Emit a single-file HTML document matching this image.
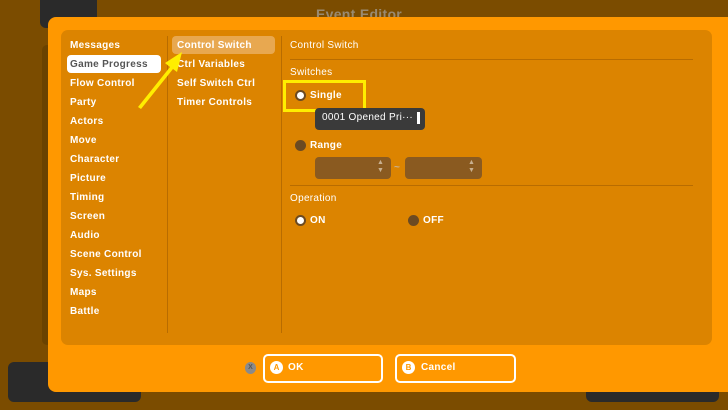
<!DOCTYPE html>
<html><head><meta charset="utf-8"><style>
body{margin:0;width:728px;height:410px;background:#7b4c00;overflow:hidden;position:relative;font-family:"Liberation Sans",sans-serif;color:#fff;font-size:10px;font-weight:bold}
.a{position:absolute}
.t{position:absolute;white-space:nowrap;letter-spacing:.3px}
.radio{position:absolute;width:11px;height:11px;border-radius:50%;background:#6b4a22}
.radio.on{background:#fff;border:2px solid #6b4a22;width:7px;height:7px}
.btn{position:absolute;height:25px;border:2px solid #fff;border-radius:5px;background:#ff9800}
.circ{position:absolute;width:13px;height:13px;border-radius:50%;background:#fff;color:#ff9800;font-size:8px;text-align:center;line-height:13px}
</style></head><body>
<div class="a" style="left:40px;top:-6px;width:57px;height:34px;background:#2a2a2a;border-radius:6px"></div>
<div class="a" style="left:42px;top:45px;width:10px;height:300px;background:#6a4200;border-radius:6px"></div>
<div class="t" style="left:316px;top:6px;color:#9a8a70;font-size:14px">Event Editor</div>
<div class="a" style="left:8px;top:362px;width:133px;height:40px;background:#2a2a2a;border-radius:6px"></div>
<div class="a" style="left:586px;top:380px;width:133px;height:22px;background:#2a2a2a;border-radius:6px"></div>
<div class="a" style="left:48px;top:17px;width:690px;height:375px;background:#ff9800;border-radius:8px"></div>
<div class="a" style="left:61px;top:30px;width:651px;height:315px;background:#dc8400;border-radius:7px"></div>
<div class="a" style="left:167px;top:36px;width:1px;height:297px;background:#b86c00"></div>
<div class="a" style="left:281px;top:36px;width:1px;height:297px;background:#b86c00"></div>
<div class="a" style="left:67px;top:55px;width:94px;height:18px;background:#fff;border-radius:4px"></div>
<div class="a" style="left:172px;top:36px;width:103px;height:18px;background:#e8a850;border-radius:4px"></div>
<div class="t" style="left:70px;top:40px">Messages</div>
<div class="t" style="left:70px;top:59px;color:#555">Game Progress</div>
<div class="t" style="left:70px;top:78px">Flow Control</div>
<div class="t" style="left:70px;top:97px">Party</div>
<div class="t" style="left:70px;top:116px">Actors</div>
<div class="t" style="left:70px;top:135px">Move</div>
<div class="t" style="left:70px;top:154px">Character</div>
<div class="t" style="left:70px;top:173px">Picture</div>
<div class="t" style="left:70px;top:192px">Timing</div>
<div class="t" style="left:70px;top:211px">Screen</div>
<div class="t" style="left:70px;top:230px">Audio</div>
<div class="t" style="left:70px;top:249px">Scene Control</div>
<div class="t" style="left:70px;top:268px">Sys. Settings</div>
<div class="t" style="left:70px;top:287px">Maps</div>
<div class="t" style="left:70px;top:306px">Battle</div>
<div class="t" style="left:177px;top:40px">Control Switch</div>
<div class="t" style="left:177px;top:59px">Ctrl Variables</div>
<div class="t" style="left:177px;top:78px">Self Switch Ctrl</div>
<div class="t" style="left:177px;top:97px">Timer Controls</div>
<svg class="a" style="left:130px;top:45px" width="60" height="70"><polygon points="8,62 40,22 35,18 52,7 47,27 43,24 11,64" fill="#ffee00"/></svg>
<div class="t" style="left:290px;top:40px;font-weight:normal">Control Switch</div>
<div class="a" style="left:290px;top:59px;width:403px;height:1px;background:#b86c00"></div>
<div class="t" style="left:290px;top:67px;font-weight:normal">Switches</div>
<div class="a" style="left:283px;top:80px;width:77px;height:26px;border:3px solid #ffee00"></div>
<div class="radio on" style="left:295px;top:90px"></div>
<div class="t" style="left:310px;top:90px">Single</div>
<div class="a" style="left:315px;top:108px;width:110px;height:22px;background:#3a3a3a;border-radius:4px"></div>
<div class="t" style="left:322px;top:112px;font-weight:normal">0001 Opened Pri···</div>
<div class="a" style="left:417px;top:112px;width:3px;height:12px;background:#fff"></div>
<div class="radio" style="left:295px;top:140px"></div>
<div class="t" style="left:310px;top:140px">Range</div>
<div class="a" style="left:315px;top:157px;width:76px;height:22px;background:#8a5a20;border-radius:4px"></div>
<div class="a" style="left:405px;top:157px;width:77px;height:22px;background:#8a5a20;border-radius:4px"></div>
<div class="t" style="left:377px;top:159px;font-size:7px;color:#c8b090;line-height:8px">▲<br>▼</div>
<div class="t" style="left:468px;top:159px;font-size:7px;color:#c8b090;line-height:8px">▲<br>▼</div>
<div class="t" style="left:394px;top:162px;color:#c8b090">~</div>
<div class="a" style="left:290px;top:185px;width:403px;height:1px;background:#b86c00"></div>
<div class="t" style="left:290px;top:193px;font-weight:normal">Operation</div>
<div class="radio on" style="left:295px;top:215px"></div>
<div class="t" style="left:310px;top:215px">ON</div>
<div class="radio" style="left:408px;top:215px"></div>
<div class="t" style="left:423px;top:215px">OFF</div>
<div class="a" style="left:245px;top:362px;width:11px;height:12px;border-radius:50%;background:#8a8a8a;color:#555;font-size:7px;text-align:center;line-height:12px">X</div>
<div class="btn" style="left:263px;top:354px;width:116px"></div>
<div class="circ" style="left:270px;top:361px">A</div>
<div class="t" style="left:288px;top:362px">OK</div>
<div class="btn" style="left:395px;top:354px;width:117px"></div>
<div class="circ" style="left:402px;top:361px">B</div>
<div class="t" style="left:421px;top:362px">Cancel</div>
</body></html>
